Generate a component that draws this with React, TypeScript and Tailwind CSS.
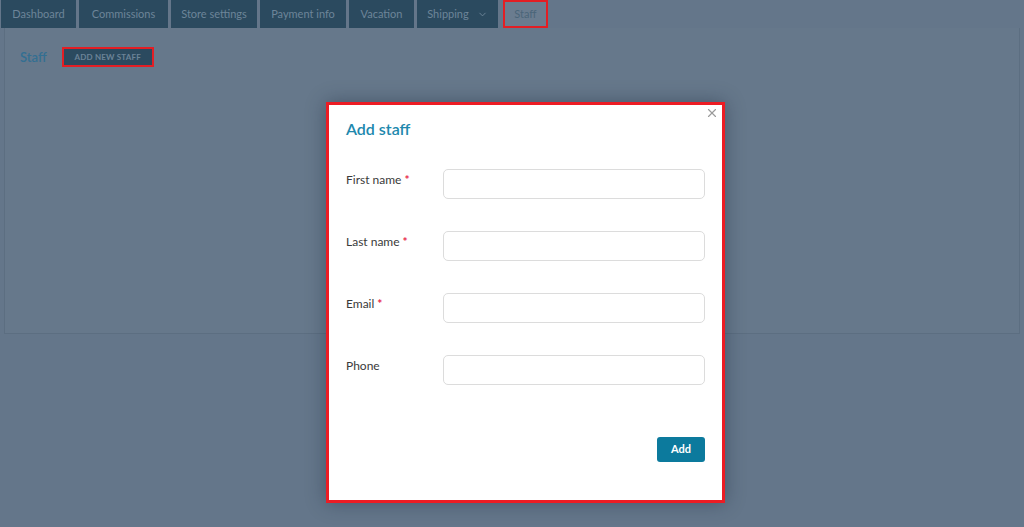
import { ChevronDown, X } from "lucide-react";

const tabs = [
  { label: "Dashboard", w: "w-[75px]" },
  { label: "Commissions", w: "w-[89px]" },
  { label: "Store settings", w: "w-[86px]" },
  { label: "Payment info", w: "w-[86px]" },
  { label: "Vacation", w: "w-[65px]" },
];

const fields = [
  { label: "First name", required: true },
  { label: "Last name", required: true },
  { label: "Email", required: true },
  { label: "Phone", required: false },
];

function Field({ label, required }: { label: string; required: boolean }) {
  return (
    <div className="flex items-start">
      <label className="w-[97px] shrink-0 pt-[3px] text-[12px] leading-[16px] text-[#3a3a3a]">
        {label}
        {required ? (
          <span className="ml-[3px] font-bold text-[#e8264b]">*</span>
        ) : null}
      </label>
      <input
        type="text"
        className="h-[30px] w-[262px] rounded-[5px] border border-[#dcdcdc] bg-white px-2 text-[12px] outline-none"
      />
    </div>
  );
}

export default function App() {
  return (
    <div
      className="relative h-[527px] w-[1024px] overflow-hidden bg-[#64768a]"
      style={{ fontFamily: "Lato, 'Open Sans', sans-serif" }}
    >
      {/* tab bar */}
      <nav className="flex h-[28px] items-stretch gap-[3px] pl-[1px]">
        {tabs.map((t) => (
          <div
            key={t.label}
            className={`${t.w} flex items-center justify-center bg-[#2b4a5f] text-[11px] text-[#6d8599]`}
          >
            {t.label}
          </div>
        ))}
        <div className="flex w-[81px] items-center justify-center gap-[8px] bg-[#2b4a5f] text-[11px] text-[#6d8599]">
          Shipping
          <ChevronDown className="h-[11px] w-[11px]" strokeWidth={2} />
        </div>
        <div className="ml-[2px] flex w-[45px] items-center justify-center border-2 border-[#e31e24] bg-[#6a7c8f] text-[11px] text-[#4a6579]">
          Staff
        </div>
      </nav>

      {/* staff panel */}
      <section className="mx-[4px] h-[306px] border border-t-0 border-[#5c6e81] bg-[#66788b] px-[15px] pt-[18px]">
        <div className="flex items-center gap-[15px]">
          <span className="pt-[2px] text-[13px] font-semibold text-[#336f92]">Staff</span>
          <button className="flex h-[20px] w-[92px] items-center justify-center border-2 border-[#e31e24] bg-[#2b4a5f] text-[8px] font-bold tracking-[0.2px] text-[#6b8397]">
            ADD NEW STAFF
          </button>
        </div>
      </section>

      {/* modal */}
      <div className="absolute left-[326px] top-[102px] h-[401px] w-[399px] border-[3px] border-[#ec1c24] bg-white px-[17px] pt-[14px] shadow-[0_0_18px_rgba(30,45,65,0.45)]">
        <button className="absolute right-[3px] top-[1px] text-[#9b9b9b]">
          <X className="h-[14px] w-[14px]" strokeWidth={2} />
        </button>
        <h2 className="text-[16px] font-semibold leading-[20px] text-[#2088ad]">
          Add staff
        </h2>
        <div className="mt-[30px] flex flex-col gap-[32px]">
          {fields.map((f) => (
            <Field key={f.label} label={f.label} required={f.required} />
          ))}
        </div>
        <div className="mt-[52px] flex justify-end">
          <button className="h-[25px] w-[48px] rounded-[3px] bg-[#0c7a9d] text-[11px] font-bold text-white">
            Add
          </button>
        </div>
      </div>
    </div>
  );
}
